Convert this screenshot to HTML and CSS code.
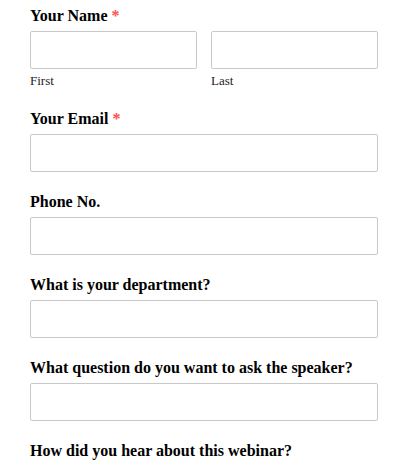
FILE: index.html
```html
<!DOCTYPE html>
<html lang="en">
<head>
    <meta charset="UTF-8">
    <title>Webinar Registration</title>
    <link rel="stylesheet" href="styles.css">
</head>
<body>
<form class="form">
    <div class="field">
        <label class="label">Your Name <span class="req">*</span></label>
        <div class="name-row">
            <div class="name-col">
                <input class="input" type="text">
                <span class="sub">First</span>
            </div>
            <div class="name-col">
                <input class="input" type="text">
                <span class="sub">Last</span>
            </div>
        </div>
    </div>
    <div class="field">
        <label class="label">Your Email <span class="req">*</span></label>
        <input class="input" type="email">
    </div>
    <div class="field">
        <label class="label">Phone No.</label>
        <input class="input" type="tel">
    </div>
    <div class="field">
        <label class="label">What is your department?</label>
        <input class="input" type="text">
    </div>
    <div class="field">
        <label class="label">What question do you want to ask the speaker?</label>
        <input class="input" type="text">
    </div>
    <div class="field">
        <label class="label">How did you hear about this webinar?</label>
    </div>
</form>
</body>
</html>
```

FILE: styles.css
```css
*{
    margin: 0;
    padding: 0;
    box-sizing: border-box;
}
body{
    font-family: "Liberation Serif", "Times New Roman", serif;
    background-color: #fff;
    color: #000;
}
.form{
    width: 348px;
    margin-left: 30px;
    padding-top: 4px;
}
.field{
    margin-bottom: 18px;
}
.label{
    display: block;
    font-size: 16px;
    font-weight: bold;
    line-height: 24px;
    margin-bottom: 3px;
}
.req{
    color: #ff4f4f;
}
.input{
    display: block;
    width: 100%;
    height: 38px;
    border: 1px solid #c9c9c9;
    border-radius: 2px;
    background-color: #fff;
    font-size: 16px;
}
.name-row{
    display: flex;
    gap: 14px;
}
.name-col{
    flex: 1;
}
.sub{
    display: block;
    margin-top: 4px;
    font-size: 13px;
    line-height: 16px;
    color: #222;
}
```
